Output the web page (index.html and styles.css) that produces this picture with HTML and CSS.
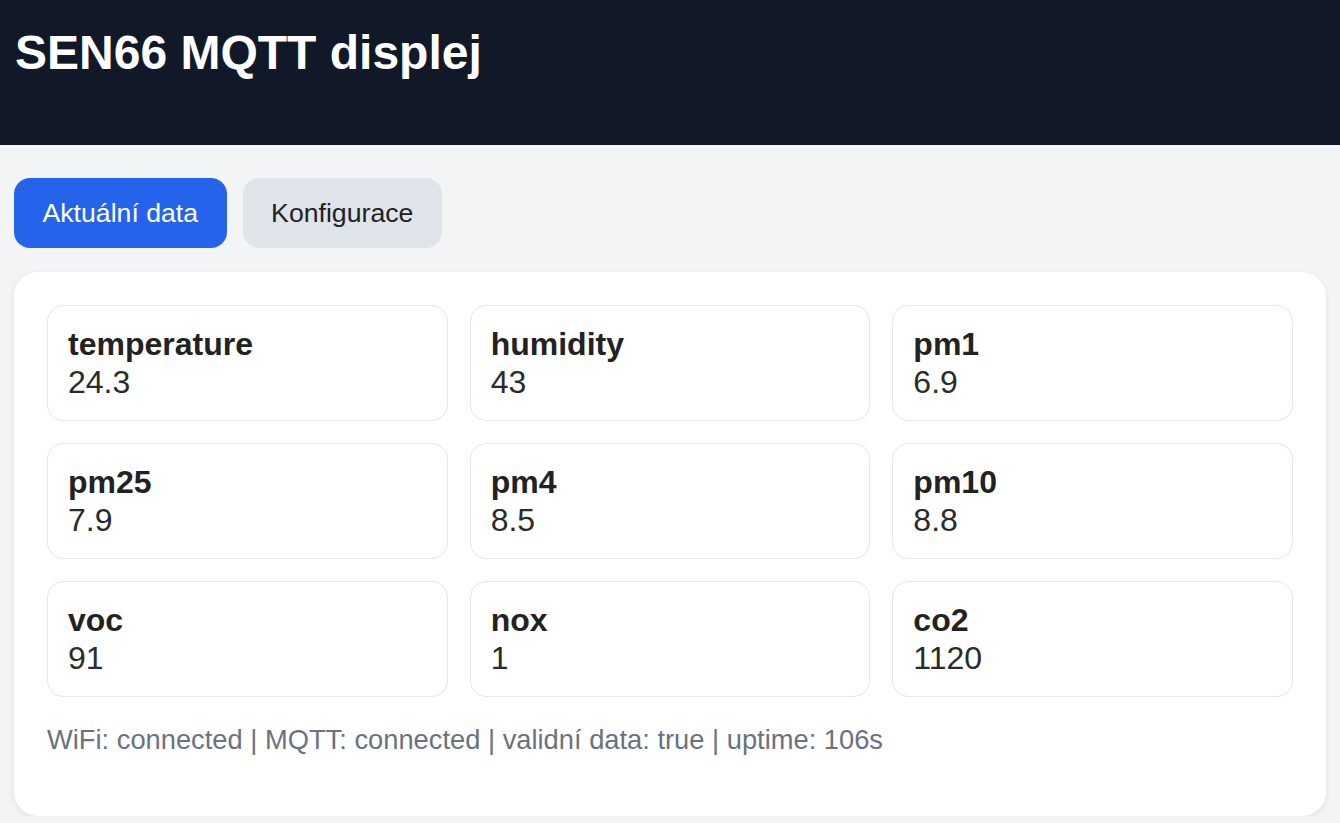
FILE: index.html
```html
<!DOCTYPE html>
<html lang="cs">
<head>
    <meta charset="UTF-8">
    <meta name="viewport" content="width=device-width, initial-scale=1.0">
    <title>SEN66 MQTT displej</title>
    <link rel="stylesheet" href="styles.css">
</head>
<body>
    <header class="topbar">
        <h1>SEN66 MQTT displej</h1>
    </header>

    <main class="content">
        <nav class="tabs">
            <button class="tab active">Aktuální data</button>
            <button class="tab">Konfigurace</button>
        </nav>

        <section class="panel">
            <div class="grid">
                <div class="metric"><div class="name">temperature</div><div class="value">24.3</div></div>
                <div class="metric"><div class="name">humidity</div><div class="value">43</div></div>
                <div class="metric"><div class="name">pm1</div><div class="value">6.9</div></div>
                <div class="metric"><div class="name">pm25</div><div class="value">7.9</div></div>
                <div class="metric"><div class="name">pm4</div><div class="value">8.5</div></div>
                <div class="metric"><div class="name">pm10</div><div class="value">8.8</div></div>
                <div class="metric"><div class="name">voc</div><div class="value">91</div></div>
                <div class="metric"><div class="name">nox</div><div class="value">1</div></div>
                <div class="metric"><div class="name">co2</div><div class="value">1120</div></div>
            </div>
            <p class="status">WiFi: connected | MQTT: connected | validní data: true | uptime: 106s</p>
        </section>
    </main>
</body>
</html>
```

FILE: styles.css
```css
body {
    font-family: "Liberation Sans", Arial, sans-serif;
    font-size: 32px;
    line-height: 1.2;
    background-color: #f3f4f6;
    color: #222;
    margin: 0;
    padding: 0;
}

.topbar {
    background-color: #111827;
    color: #fff;
    height: 145px;
    box-sizing: border-box;
    padding: 25px 15px 0;
}

.topbar h1 {
    margin: 0;
    font-size: 48px;
    line-height: 55px;
    font-weight: 700;
}

.content {
    padding: 33px 14px 0;
}

.tabs {
    display: flex;
    gap: 16px;
    margin-bottom: 24px;
}

.tab {
    font-family: "Liberation Sans", Arial, sans-serif;
    font-size: 26.67px;
    height: 70px;
    padding: 0 28.5px;
    border: none;
    border-radius: 16px;
    background-color: #dfe4ea;
    color: #222;
    cursor: pointer;
}

.tab.active {
    background-color: #2563eb;
    color: #fff;
}

.panel {
    background-color: #fff;
    border-radius: 24px;
    padding: 33px;
    box-shadow: 0 2px 6px rgba(0, 0, 0, 0.08);
}

.grid {
    display: grid;
    grid-template-columns: repeat(3, 1fr);
    gap: 22px;
}

.metric {
    border: 1px solid #e6e7ea;
    border-radius: 16px;
    padding: 18.6px 20px;
}

.name {
    font-weight: 700;
}

.value {
    color: #2b2b2b;
}

.status {
    font-size: 27.3px;
    color: #6b7280;
    margin: 27px 0 26px;
}
```
